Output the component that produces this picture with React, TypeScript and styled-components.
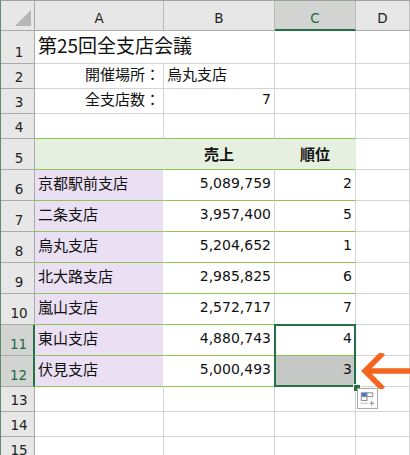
import * as React from 'react';
import styled, { createGlobalStyle } from 'styled-components';

const COLS = ['A', 'B', 'C', 'D'];
const ROW_HEIGHTS = [33, 25, 25, 25, 31, 31, 31, 31, 31, 31, 31, 31, 25, 25, 25];

const BRANCHES = [
  ['京都駅前支店', '5,089,759', '2'],
  ['二条支店', '3,957,400', '5'],
  ['烏丸支店', '5,204,652', '1'],
  ['北大路支店', '2,985,825', '6'],
  ['嵐山支店', '2,572,717', '7'],
  ['東山支店', '4,880,743', '4'],
  ['伏見支店', '5,000,493', '3'],
];

const GlobalStyle = createGlobalStyle`
  html, body {
    margin: 0;
    background: #fff;
    overflow: hidden;
  }
`;

export default function App() {
  return (
    <>
      <GlobalStyle />
      <Sheet>
        <Corner>
          <svg width="18" height="18" viewBox="0 0 18 18">
            <path d="M1 17 L17 1 V17 Z" fill="#b5b7b5" />
          </svg>
        </Corner>
        {COLS.map((c) => (
          <ColHead key={c} $active={c === 'C'}>{c}</ColHead>
        ))}

        <RowHead>1</RowHead>
        <Cell $overflow $size={19}>第25回全支店会議</Cell>
        <Cell />
        <Cell />
        <Cell />

        <RowHead>2</RowHead>
        <Cell $right>開催場所：</Cell>
        <Cell>烏丸支店</Cell>
        <Cell />
        <Cell />

        <RowHead>3</RowHead>
        <Cell $right>全支店数：</Cell>
        <Cell $right $num>7</Cell>
        <Cell />
        <Cell />

        <RowHead>4</RowHead>
        <Cell $line />
        <Cell $line />
        <Cell $line />
        <Cell />

        <RowHead>5</RowHead>
        <Cell $fill="#e5f0e0" $line $flat />
        <Cell $fill="#e5f0e0" $line $flat $center $bold>売上</Cell>
        <Cell $fill="#e5f0e0" $line $flat $center $bold>順位</Cell>
        <Cell />

        {BRANCHES.map(([name, sales, rank], i) => (
          <React.Fragment key={name}>
            <RowHead $active={i >= 5}>{i + 6}</RowHead>
            <Cell $fill="#eadff3" $line>{name}</Cell>
            <Cell $right $num $line>{sales}</Cell>
            <Cell $right $num $line $fill={i === 6 ? '#c6c8c5' : undefined}>{rank}</Cell>
            <Cell />
          </React.Fragment>
        ))}

        {[13, 14, 15].map((n) => (
          <React.Fragment key={n}>
            <RowHead>{n}</RowHead>
            <Cell />
            <Cell />
            <Cell />
            <Cell />
          </React.Fragment>
        ))}

        <Selection />
        <FillHandle />
        <PasteOptions>
          <svg width="20" height="20" viewBox="0 0 20 20">
            <rect x="3.5" y="3.5" width="6" height="4" fill="#3b78e7" stroke="#8a8a8a" />
            <rect x="9.5" y="3.5" width="6" height="4" fill="#fff" stroke="#8a8a8a" />
            <rect x="3.5" y="7.5" width="6" height="4" fill="#fff" stroke="#8a8a8a" />
            <path d="M3 14.5h7" stroke="#777" strokeDasharray="1 1" />
            <path d="M12 14.5h5M14.500 12v5" stroke="#8a8a8a" />
          </svg>
        </PasteOptions>
        <Arrow>
          <svg width="52" height="36" viewBox="0 0 52 36">
            <path d="M52 18 H6 M24 0 L6 18 L24 36" fill="none" stroke="#f4641c" strokeWidth="5.500" />
          </svg>
        </Arrow>
      </Sheet>
    </>
  );
}

const Sheet = styled.div`
  position: relative;
  display: grid;
  width: 410px;
  height: 455px;
  overflow: hidden;
  box-sizing: border-box;
  border-top: 1px solid #a0a2a0;
  border-left: 1px solid #5f8a70;
  grid-template-columns: 34px 129px 111px 81px 54px;
  grid-template-rows: 30px ${ROW_HEIGHTS.map((h) => `${h}px`).join(' ')};
  font-family: "Noto Sans CJK JP", "DejaVu Sans", sans-serif;
  font-size: 15px;
  color: #111;
`;

const Corner = styled.div`
  display: flex;
  align-items: flex-end;
  justify-content: flex-end;
  padding: 0 2px 3px 0;
  box-sizing: border-box;
  background: #e6e7e6;
  border-right: 1px solid #a9aaa9;
  border-bottom: 1px solid #a9aaa9;
`;

const ColHead = styled.div<{ $active?: boolean }>`
  display: flex;
  align-items: center;
  justify-content: center;
  box-sizing: border-box;
  padding-top: 5px;
  font-family: "DejaVu Sans", sans-serif;
  font-size: 13.5px;
  background: ${(p) => (p.$active ? '#d2d4d1' : '#e6e7e6')};
  color: ${(p) => (p.$active ? '#1f6b45' : '#222')};
  border-right: 1px solid #b9bab9;
  border-bottom: ${(p) => (p.$active ? '2px solid #217346' : '1px solid #a9aaa9')};
`;

const RowHead = styled.div<{ $active?: boolean }>`
  display: flex;
  align-items: flex-end;
  justify-content: center;
  box-sizing: border-box;
  padding: 0 0 3px 3px;
  font-family: "DejaVu Sans", sans-serif;
  font-size: 13.5px;
  background: ${(p) => (p.$active ? '#d2d4d1' : '#e6e7e6')};
  color: ${(p) => (p.$active ? '#1f6b45' : '#222')};
  border-right: ${(p) => (p.$active ? '2px solid #217346' : '1px solid #a9aaa9')};
  border-bottom: 1px solid #a9aaa9;
`;

const Cell = styled.div<{
  $fill?: string;
  $right?: boolean;
  $center?: boolean;
  $bold?: boolean;
  $line?: boolean;
  $flat?: boolean;
  $overflow?: boolean;
  $num?: boolean;
  $size?: number;
}>`
  position: relative;
  z-index: ${(p) => (p.$overflow ? 1 : 0)};
  display: flex;
  align-items: center;
  justify-content: ${(p) => (p.$right ? 'flex-end' : p.$center ? 'center' : 'flex-start')};
  box-sizing: border-box;
  padding: 0 3px ${(p) => (p.$bold ? 0 : 4)}px 3px;
  white-space: nowrap;
  min-width: 0;
  line-height: 20px;
  font-family: ${(p) => (p.$num ? '"DejaVu Sans", sans-serif' : 'inherit')};
  font-size: ${(p) => p.$size ?? (p.$num ? 14 : 15)}px;
  font-weight: ${(p) => (p.$bold ? 700 : 400)};
  background: ${(p) => p.$fill ?? (p.$overflow ? 'transparent' : '#fff')};
  border-right: 1px solid ${(p) => (p.$flat ? 'transparent' : p.$fill ? '#fff' : p.$overflow ? 'transparent' : '#d4d4d4')};
  border-bottom: 1px solid ${(p) => (p.$line ? '#8cc455' : '#d4d4d4')};
`;

const Selection = styled.div`
  position: absolute;
  left: 273px;
  top: 323px;
  width: 82px;
  height: 63px;
  z-index: 2;
  box-sizing: border-box;
  border: 2px solid #217346;
  pointer-events: none;
`;

const FillHandle = styled.div`
  position: absolute;
  left: 352px;
  top: 383px;
  z-index: 3;
  width: 6px;
  height: 6px;
  background: #217346;
  border: 1px solid #fff;
`;

const PasteOptions = styled.div`
  position: absolute;
  left: 356px;
  top: 387px;
  z-index: 3;
  width: 19px;
  height: 19px;
  display: flex;
  align-items: center;
  justify-content: center;
  background: #fff;
  border: 1px solid #a9a9a9;
`;

const Arrow = styled.div`
  position: absolute;
  left: 358px;
  top: 352px;
  z-index: 3;
  display: flex;
`;
